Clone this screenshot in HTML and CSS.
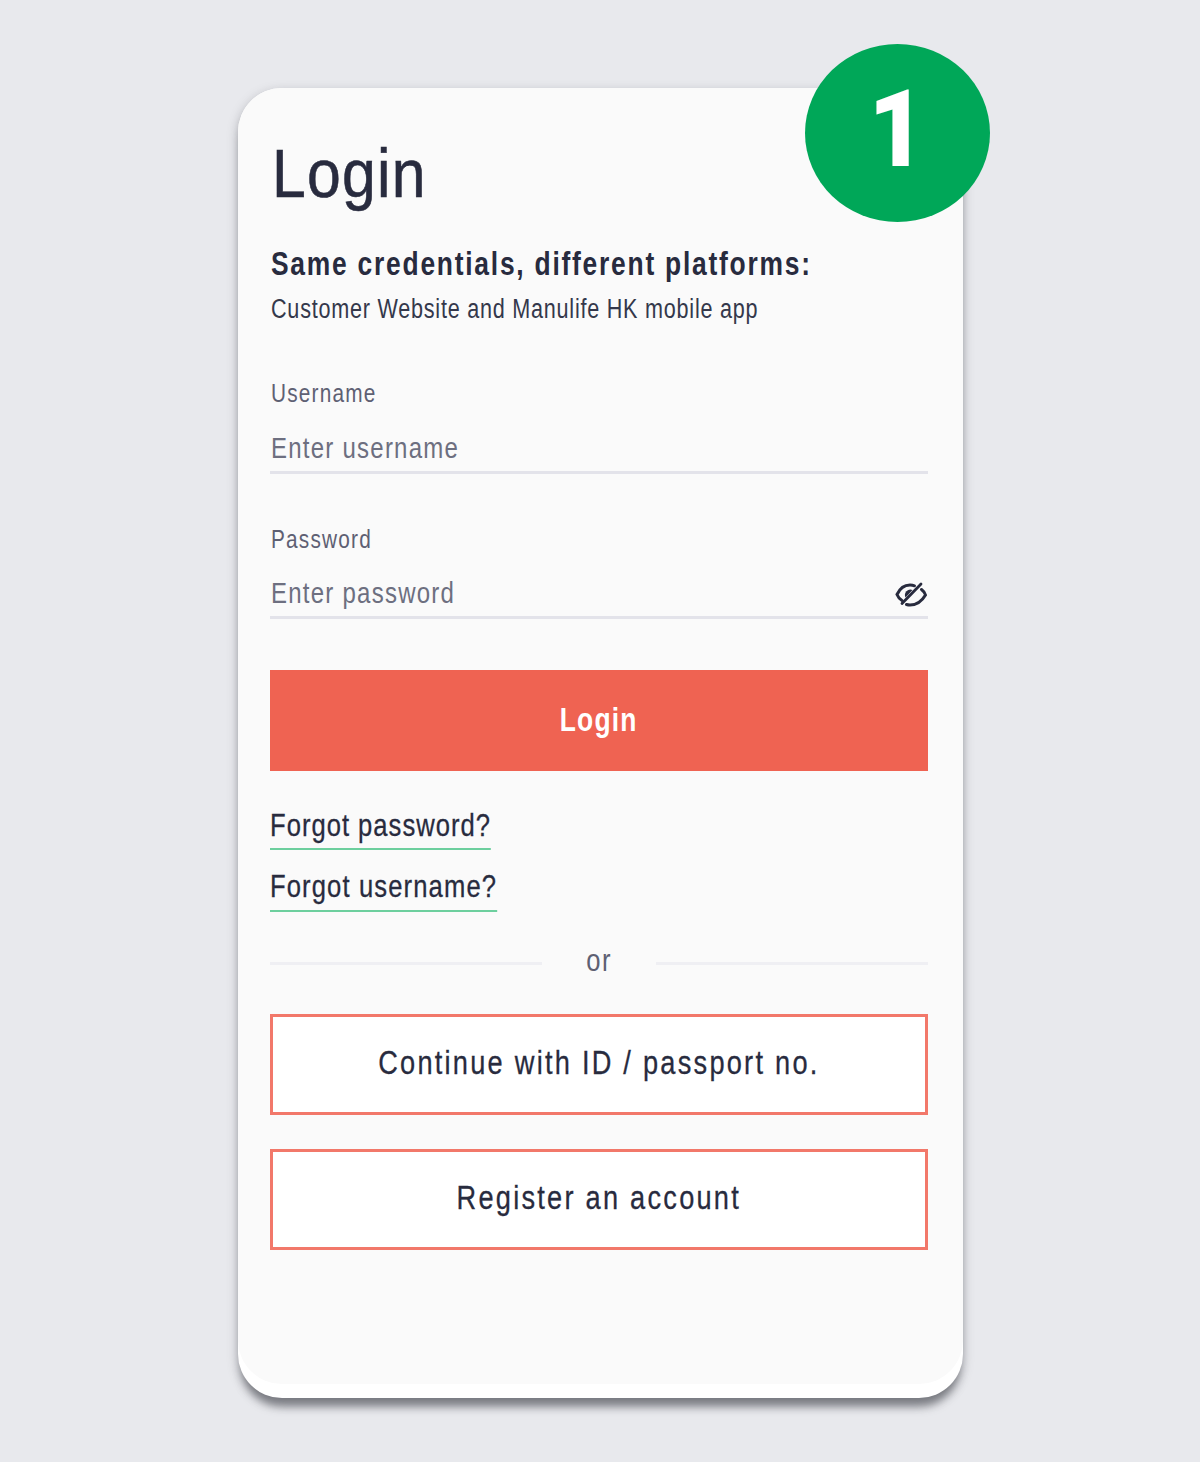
FILE: index.html
```html
<!DOCTYPE html>
<html lang="en">
<head>
<meta charset="utf-8">
<title>Login</title>
<link rel="stylesheet" href="styles.css">
</head>
<body>
<main class="card">
  <div class="inner">
    <h1 class="title"><span class="sq">Login</span></h1>
    <h2 class="subtitle"><span class="sq">Same credentials, different platforms:</span></h2>
    <p class="desc"><span class="sq">Customer Website and Manulife HK mobile app</span></p>
    <div class="field field-first">
      <label class="label"><span class="sq">Username</span></label>
      <div class="control"><span class="placeholder sq">Enter username</span></div>
    </div>
    <div class="field field-second">
      <label class="label"><span class="sq">Password</span></label>
      <div class="control">
        <span class="placeholder sq">Enter password</span>
        <svg class="eye" viewBox="0 0 32 28" width="32" height="28" aria-hidden="true">
          <path d="M7 19.500C4.500 18 3 16 2 13.500 5 7 10 4 15 4c1.500 0 3 .2 4.500 .8" fill="none" stroke="#282b3e" stroke-width="3" stroke-linecap="round"/>
          <path d="M26.500 8.500c2 1.500 3.500 3.500 4 5.500C27 20 21 24 15 24c-1.500 0-2.500-.2-3.500-.5" fill="none" stroke="#282b3e" stroke-width="3" stroke-linecap="round"/>
          <path d="M7 22.500L26 3" fill="none" stroke="#282b3e" stroke-width="2.800" stroke-linecap="round"/>
          <path d="M10.500 16.500a5.500 5.500 0 0 1 7-7.500z" fill="#282b3e"/>
        </svg>
      </div>
    </div>
    <button class="primary" type="button"><span class="sqc">Login</span></button>
    <div class="links">
      <a class="link link-a sq">Forgot password?</a>
      <a class="link link-b sq">Forgot username?</a>
    </div>
    <div class="divider"><span class="rule"></span><span class="or"><span class="sqc">or</span></span><span class="rule"></span></div>
    <button class="outline outline-a" type="button"><span class="sqc">Continue with ID / passport no.</span></button>
    <button class="outline outline-b" type="button"><span class="sqc">Register an account</span></button>
  </div>
  <div class="badge"><span class="badge-num">1</span></div>
</main>
</body>
</html>
```
FILE: styles.css
```css
* { box-sizing: border-box; }
html, body { margin: 0; padding: 0; }
body {
  width: 1200px;
  height: 1462px;
  background: #e8e9ed;
  padding: 88px 0 0 238px;
  overflow: hidden;
  font-family: "Liberation Sans", Arial, sans-serif;
  color: #282b3e;
}
.sq {
  display: inline-block;
  white-space: nowrap;
  transform: scaleX(0.8);
  transform-origin: left center;
}
.sqc {
  display: inline-block;
  white-space: nowrap;
  transform: scaleX(0.8);
  transform-origin: center center;
}
.card {
  position: relative;
  width: 725px;
  height: 1310px;
  background: #fff;
  border-radius: 44px;
  box-shadow: 0 13px 9px -4px rgba(60, 62, 70, 0.5), 0 4px 11px rgba(80, 82, 90, 0.4);
}
.inner {
  height: 1296px;
  background: #fafafa;
  border-radius: 44px;
  padding: 50px 35px 0 32px;
  display: flex;
  flex-direction: column;
}
.title {
  margin: 0 0 0 2px;
  font-size: 69px;
  line-height: 72px;
  font-weight: 400;
  letter-spacing: 1.400px;
  -webkit-text-stroke: 0.600px #282b3e;
}
.title .sq { transform: scaleX(0.88); }
.subtitle {
  margin: 34px 0 0 1px;
  font-size: 33px;
  line-height: 40px;
  font-weight: 700;
  letter-spacing: 2.200px;
}
.desc {
  margin: 9px 0 0 1px;
  font-size: 27px;
  line-height: 32px;
  letter-spacing: 0.950px;
  color: #34384b;
}
.field-first { margin-top: 52px; }
.field-second { margin-top: 49px; }
.label {
  display: block;
  margin-left: 1px;
  font-size: 26px;
  line-height: 32px;
  letter-spacing: 1.500px;
  color: #5e6073;
}
.control {
  display: flex;
  justify-content: space-between;
  align-items: center;
  height: 50px;
  margin-top: 15px;
  border-bottom: 3px solid #e3e3ea;
}
.field-second .control { margin-top: 14px; }
.placeholder {
  margin-left: 1px;
  font-size: 30px;
  letter-spacing: 1.550px;
  color: #6d6f80;
}
.eye { margin: 4px 1px 0 0; flex: none; }
.primary {
  display: block;
  width: 100%;
  height: 101px;
  margin-top: 51px;
  border: 0;
  background: #ef6352;
  color: #fff;
  font: 700 33px "Liberation Sans", Arial, sans-serif;
  letter-spacing: 1.500px;
  padding-bottom: 2px;
}
.links { display: flex; flex-direction: column; align-items: flex-start; margin-top: 34px; }
.link {
  display: block;
  font-size: 32px;
  line-height: 40px;
  letter-spacing: 1.250px;
  padding-bottom: 4px;
  border-bottom: 2px solid #6dcf9e;
  -webkit-text-stroke: 0.300px #282b3e;
}
.link-a { padding-bottom: 3px; }
.link-b { margin-top: 16px; letter-spacing: 1.400px; }
.divider { display: flex; align-items: center; height: 40px; margin-top: 28px; }
.rule { flex: 1; height: 3px; background: #efeff3; margin-top: 6px; }
.or { width: 114px; text-align: center; font-size: 32px; letter-spacing: 2px; color: #5e6073; }
.outline {
  display: block;
  width: 100%;
  height: 101px;
  background: #fff;
  border: 3px solid #f2786a;
  color: #282b3e;
  font: 400 34px "Liberation Sans", Arial, sans-serif;
  letter-spacing: 2.800px;
  padding-bottom: 5px;
  -webkit-text-stroke: 0.300px #282b3e;
}
.outline-a { margin-top: 34px; }
.outline-b { margin-top: 34px; }
.badge {
  position: absolute;
  left: 567px;
  top: -44px;
  width: 185px;
  height: 178px;
  border-radius: 50%;
  background: #00a758;
  color: #fff;
  font-family: Roboto, "Liberation Sans", Arial, sans-serif;
  font-weight: 900;
  font-size: 107px;
  line-height: 172px;
  text-align: center;
}
.badge-num { display: inline-block; transform: scaleX(0.92); }
```
